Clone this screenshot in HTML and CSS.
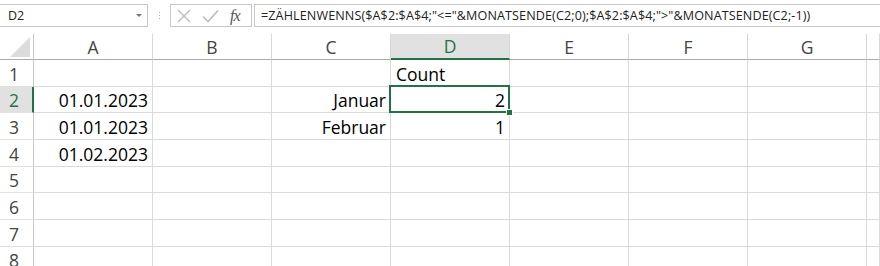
FILE: index.html
```html
<!DOCTYPE html>
<html lang="de">
<head>
    <meta charset="UTF-8">
    <title>ZÄHLENWENNS Monat</title>
    <link rel="stylesheet" href="styles.css">
</head>
<body>

    <div class="formula-bar">
        <div class="name-box">
            <span>D2</span>
            <span class="drop-arrow"></span>
        </div>
        <div class="grip">
            <span></span><span></span><span></span>
        </div>
        <div class="fx-box">
            <svg class="icon" width="14" height="14" viewBox="0 0 14 14">
                <path d="M1 1 L13 13 M13 1 L1 13" stroke="#bcbcbc" stroke-width="1.4" fill="none"/>
            </svg>
            <svg class="icon" width="17" height="14" viewBox="0 0 17 14">
                <path d="M1 7.5 L6 12.5 L16 1.5" stroke="#bcbcbc" stroke-width="1.6" fill="none"/>
            </svg>
            <span class="fx">fx</span>
        </div>
        <div class="formula">=ZÄHLENWENNS($A$2:$A$4;"&lt;="&amp;MONATSENDE(C2;0);$A$2:$A$4;"&gt;"&amp;MONATSENDE(C2;-1))</div>
    </div>

    <div class="sheet">
        <!-- header row -->
        <div class="corner"><span class="corner-tri"></span></div>
        <div class="col-head">A</div>
        <div class="col-head">B</div>
        <div class="col-head">C</div>
        <div class="col-head active">D</div>
        <div class="col-head">E</div>
        <div class="col-head">F</div>
        <div class="col-head">G</div>
        <div class="col-head"></div>

        <!-- 1 -->
        <div class="row-head">1</div>
        <div class="cell"></div>
        <div class="cell"></div>
        <div class="cell"></div>
        <div class="cell">Count</div>
        <div class="cell"></div>
        <div class="cell"></div>
        <div class="cell"></div>
        <div class="cell"></div>

        <!-- 2 -->
        <div class="row-head active">2</div>
        <div class="cell num">01.01.2023</div>
        <div class="cell"></div>
        <div class="cell num">Januar</div>
        <div class="cell num selected">2</div>
        <div class="cell"></div>
        <div class="cell"></div>
        <div class="cell"></div>
        <div class="cell"></div>

        <!-- 3 -->
        <div class="row-head">3</div>
        <div class="cell num">01.01.2023</div>
        <div class="cell"></div>
        <div class="cell num">Februar</div>
        <div class="cell num">1</div>
        <div class="cell"></div>
        <div class="cell"></div>
        <div class="cell"></div>
        <div class="cell"></div>

        <!-- 4 -->
        <div class="row-head">4</div>
        <div class="cell num">01.02.2023</div>
        <div class="cell"></div>
        <div class="cell"></div>
        <div class="cell"></div>
        <div class="cell"></div>
        <div class="cell"></div>
        <div class="cell"></div>
        <div class="cell"></div>

        <!-- 5 -->
        <div class="row-head">5</div>
        <div class="cell"></div>
        <div class="cell"></div>
        <div class="cell"></div>
        <div class="cell"></div>
        <div class="cell"></div>
        <div class="cell"></div>
        <div class="cell"></div>
        <div class="cell"></div>

        <!-- 6 -->
        <div class="row-head">6</div>
        <div class="cell"></div>
        <div class="cell"></div>
        <div class="cell"></div>
        <div class="cell"></div>
        <div class="cell"></div>
        <div class="cell"></div>
        <div class="cell"></div>
        <div class="cell"></div>

        <!-- 7 -->
        <div class="row-head">7</div>
        <div class="cell"></div>
        <div class="cell"></div>
        <div class="cell"></div>
        <div class="cell"></div>
        <div class="cell"></div>
        <div class="cell"></div>
        <div class="cell"></div>
        <div class="cell"></div>

        <!-- 8 -->
        <div class="row-head">8</div>
        <div class="cell"></div>
        <div class="cell"></div>
        <div class="cell"></div>
        <div class="cell"></div>
        <div class="cell"></div>
        <div class="cell"></div>
        <div class="cell"></div>
        <div class="cell"></div>
    </div>

</body>
</html>
```

FILE: styles.css
```css
* {
    box-sizing: border-box;
}

body {
    margin: 0;
    background: #ffffff;
    overflow: hidden;
    font-family: 'Open Sans', 'Liberation Sans', sans-serif;
}

/* formula bar */
.formula-bar {
    display: flex;
    align-items: center;
    height: 34px;
    padding-bottom: 3px;
}

.name-box {
    display: flex;
    align-items: center;
    justify-content: space-between;
    width: 148px;
    height: 23px;
    border: 1px solid #c6c6c6;
    border-left: none;
    padding: 0 5px 0 8px;
    font-size: 12.5px;
    color: #222;
}

.drop-arrow {
    width: 0;
    height: 0;
    border-left: 3px solid transparent;
    border-right: 3px solid transparent;
    border-top: 3px solid #777;
}

.grip {
    display: flex;
    flex-direction: column;
    gap: 2px;
    width: 22px;
    align-items: center;
}

.grip span {
    width: 1px;
    height: 1px;
    background: #b0b0b0;
}

.fx-box {
    display: flex;
    align-items: center;
    width: 82px;
    height: 23px;
    border: 1px solid #c6c6c6;
    padding-left: 6px;
    gap: 11px;
}

.fx {
    font-family: 'Liberation Serif', serif;
    font-style: italic;
    font-size: 16px;
    color: #555;
    letter-spacing: -1px;
}

.formula {
    flex: 1;
    height: 23px;
    margin-left: 2px;
    border: 1px solid #c6c6c6;
    border-right: none;
    padding-left: 6px;
    font-size: 12.6px;
    letter-spacing: 0.1px;
    line-height: 21px;
    color: #222;
    white-space: nowrap;
}

/* sheet grid */
.sheet {
    display: grid;
    grid-template-columns: 34px repeat(7, 119px) 1fr;
    grid-template-rows: 26px repeat(8, 26.67px);
    font-size: 17.5px;
}

.corner {
    display: flex;
    justify-content: flex-end;
    align-items: flex-end;
    padding: 0 3px 2px 0;
    border-right: 1px solid #c8c8c8;
    border-bottom: 1px solid #ababab;
}

.corner-tri {
    width: 0;
    height: 0;
    border-left: 20px solid transparent;
    border-bottom: 20px solid #dcdcdc;
}

.col-head {
    display: flex;
    align-items: center;
    justify-content: center;
    color: #444;
    border-right: 1px solid #d8d8d8;
    border-bottom: 1px solid #ababab;
}

.col-head.active {
    background: #e1e1e1;
    color: #217346;
    border-bottom: 2px solid #217346;
}

.row-head {
    display: flex;
    align-items: flex-end;
    padding: 0 0 1px 9px;
    line-height: 22px;
    color: #444;
    border-right: 1px solid #c8c8c8;
    border-bottom: 1px solid #e1e1e1;
}

.row-head.active {
    background: #e1e1e1;
    color: #217346;
    border-right: 2px solid #217346;
}

.cell {
    display: flex;
    align-items: flex-end;
    padding: 0 4px 1px 5px;
    line-height: 22px;
    color: #000;
    white-space: nowrap;
    border-right: 1px solid #dadada;
    border-bottom: 1px solid #dadada;
}

.cell.num {
    justify-content: flex-end;
}

.cell.selected {
    position: relative;
}

.cell.selected::after {
    content: "";
    position: absolute;
    left: -2px;
    top: -2px;
    right: -1px;
    bottom: -1px;
    border: 2px solid #217346;
}

.cell.selected::before {
    content: "";
    position: absolute;
    right: -4px;
    bottom: -4px;
    width: 5px;
    height: 5px;
    background: #217346;
    border: 1px solid #fff;
    z-index: 1;
}
```
